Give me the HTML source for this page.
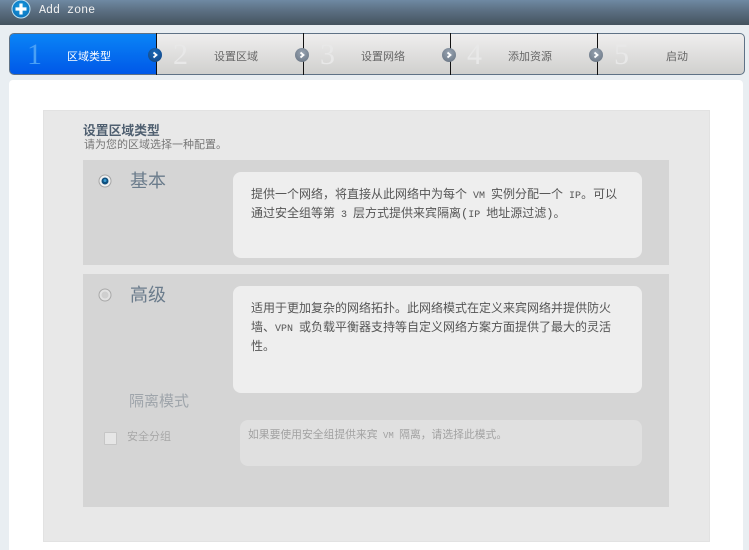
<!DOCTYPE html>
<html>
<head>
<meta charset="utf-8">
<style>
html,body{margin:0;padding:0;width:749px;height:550px;overflow:hidden;background:#e9eef2;font-family:"Liberation Mono","WenQuanYi Zen Hei","Noto Sans CJK SC",monospace}
.a{position:absolute;white-space:pre}
#head{left:0;top:0;width:749px;height:25px;background:linear-gradient(#6f89a3,#5f7488 35%,#44535e)}
#steps{left:9px;top:33px;width:736px;height:42px;box-sizing:border-box;border:1px solid #5f7286;border-radius:5px;background:linear-gradient(#efeeee,#d0d0ce);overflow:hidden}
#first{left:-1px;top:-1px;width:147px;height:40px;background:linear-gradient(#0a84f6,#0058e8);border-radius:5px 0 0 5px;border:1px solid #16406e;box-sizing:content-box;border-right:0}
.sep{top:33px;width:1px;height:42px;background:#111}
.num{top:40px;font:30px/30px "Liberation Serif",serif;color:#e8e8e8}
.lab{top:52px;font-size:11px;line-height:13px;color:#666}
.dot{top:48px;width:14px;height:14px;border-radius:50%;background:radial-gradient(circle at 50% 35%,#98a4b2,#65717f)}
.dot svg{position:absolute;left:0;top:0}
#white{left:9px;top:80px;width:734px;height:470px;background:#fff;border-radius:4px 4px 0 0}
#gray{left:43px;top:110px;width:667px;height:432px;background:#e8e8e8;box-shadow:inset 0 0 0 1px #e2e2e2}
.sec{left:83px;width:586px;background:#d5d5d5}
.box{background:#eee;border-radius:8px}
.txt{font-size:12px;line-height:19px;color:#555}
.t{font-size:10px}
</style>
</head>
<body>
<div class="a" id="head"></div>
<svg class="a" style="left:11px;top:-1px" width="20" height="20" viewBox="0 0 20 20">
<defs><radialGradient id="g" cx="50%" cy="40%" r="60%"><stop offset="0" stop-color="#1a9be0"/><stop offset="1" stop-color="#0b74bd"/></radialGradient></defs>
<circle cx="10" cy="10" r="9" fill="url(#g)" stroke="#bfe0f2" stroke-width="1"/>
<path d="M10 4.500V15.500M4.500 10H15.500" stroke="#fff" stroke-width="3.200"/>
</svg>
<div class="a" style="left:39px;top:3px;font:11.700px/14px 'Liberation Mono',monospace;color:#f2f2f2">Add zone</div>

<div class="a" id="steps"><div class="a" id="first"></div></div>
<div class="a sep" style="left:156px"></div>
<div class="a sep" style="left:303px"></div>
<div class="a sep" style="left:450px"></div>
<div class="a sep" style="left:597px"></div>

<div class="a num" style="left:27px;color:#4aa0f5">1</div>
<div class="a num" style="left:173px">2</div>
<div class="a num" style="left:320px">3</div>
<div class="a num" style="left:467px">4</div>
<div class="a num" style="left:614px">5</div>

<div class="a lab" style="left:67px;color:#fff">区域类型</div>
<div class="a lab" style="left:214px">设置区域</div>
<div class="a lab" style="left:361px">设置网络</div>
<div class="a lab" style="left:508px">添加资源</div>
<div class="a lab" style="left:666px">启动</div>

<div class="a dot" style="left:148px;background:radial-gradient(circle at 50% 35%,#1a6ab8,#12427f)"><svg width="14" height="14"><path d="M5.500 4.500L8.500 7L5.500 9.500" fill="none" stroke="#fff" stroke-width="1.800"/></svg></div>
<div class="a dot" style="left:295px"><svg width="14" height="14"><path d="M5.500 4.500L8.500 7L5.500 9.500" fill="none" stroke="#fff" stroke-width="1.800"/></svg></div>
<div class="a dot" style="left:442px"><svg width="14" height="14"><path d="M5.500 4.500L8.500 7L5.500 9.500" fill="none" stroke="#fff" stroke-width="1.800"/></svg></div>
<div class="a dot" style="left:589px"><svg width="14" height="14"><path d="M5.500 4.500L8.500 7L5.500 9.500" fill="none" stroke="#fff" stroke-width="1.800"/></svg></div>

<div class="a" id="white"></div>
<div class="a" id="gray"></div>

<div class="a" style="left:83px;top:125px;font-size:12.800px;line-height:14px;font-weight:bold;color:#4f5f70">设置区域类型</div>
<div class="a" style="left:84px;top:140px;font-size:11px;line-height:13px;color:#777">请为您的区域选择一种配置。</div>

<div class="a sec" style="top:160px;height:105px"></div>
<div class="a sec" style="top:274px;height:233px"></div>

<svg class="a" style="left:98px;top:174px" width="14" height="14">
<circle cx="7" cy="7" r="6" fill="#f1f1f1" stroke="#a5a5a5"/>
<circle cx="7" cy="7" r="3.500" fill="#10507f"/>
<circle cx="7" cy="6.500" r="1.500" fill="#3a9ad0"/>
</svg>
<div class="a" style="left:130px;top:172px;font-size:18px;line-height:22px;color:#6b7c8c">基本</div>
<div class="a box" style="left:233px;top:172px;width:409px;height:86px"></div>
<div class="a txt" style="left:251px;top:186px">提供一个网络，将直接从此网络中为每个<span class="t"> VM </span>实例分配一个<span class="t"> IP</span>。可以</div>
<div class="a txt" style="left:251px;top:205px">通过安全组等第<span class="t"> 3 </span>层方式提供来宾隔离(<span class="t">IP </span>地址源过滤)。</div>

<svg class="a" style="left:98px;top:288px" width="14" height="14">
<circle cx="7" cy="7" r="6" fill="#e2e2e2" stroke="#a8a8a8"/>
<circle cx="7" cy="7" r="3.500" fill="#cfcfcf"/>
</svg>
<div class="a" style="left:130px;top:286px;font-size:18px;line-height:22px;color:#6b7c8c">高级</div>
<div class="a box" style="left:233px;top:286px;width:409px;height:107px"></div>
<div class="a txt" style="left:251px;top:300px">适用于更加复杂的网络拓扑。此网络模式在定义来宾网络并提供防火</div>
<div class="a txt" style="left:251px;top:319px">墙、<span class="t">VPN </span>或负载平衡器支持等自定义网络方案方面提供了最大的灵活</div>
<div class="a txt" style="left:251px;top:338px">性。</div>

<div class="a" style="left:129px;top:393px;font-size:15px;line-height:20px;color:#9fa5ab">隔离模式</div>
<div class="a" style="left:104px;top:432px;width:11px;height:11px;background:#e6e6e6;border:1px solid #c6c6c6;border-radius:1px"></div>
<div class="a" style="left:127px;top:432px;font-size:11px;line-height:13px;color:#a8a8a8">安全分组</div>
<div class="a box" style="left:240px;top:420px;width:402px;height:46px;background:#e0e0e0"></div>
<div class="a" style="left:248px;top:430px;font-size:10.800px;line-height:13px;color:#a2a2a2">如果要使用安全组提供来宾<span style="font-size:9px"> VM </span>隔离，请选择此模式。</div>
</body>
</html>
